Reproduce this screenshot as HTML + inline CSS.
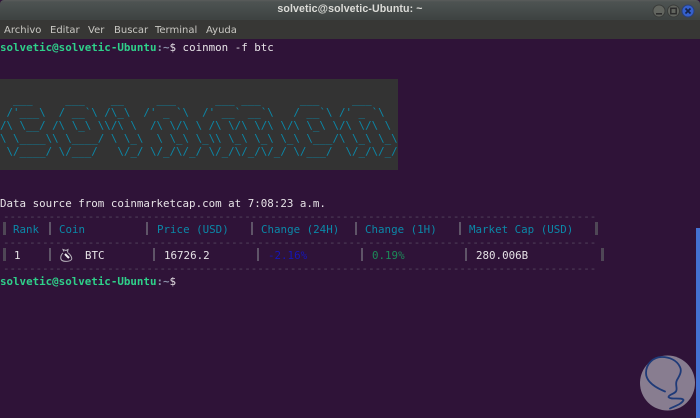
<!DOCTYPE html>
<html><head><meta charset="utf-8"><style>
*{margin:0;padding:0;box-sizing:border-box}
html,body{width:700px;height:418px;overflow:hidden;background:#2f1338}
#t{position:absolute;left:0;top:0;width:700px;height:20px;background:linear-gradient(#5a5d5c 0,#4d5352 2px,#3e4342 19px);border-radius:4px 4px 0 0}
#m{position:absolute;left:0;top:20px;width:700px;height:19px;background:#373735}
.u{position:absolute;font:10px/13px "DejaVu Sans",sans-serif;white-space:pre;color:#c9c8c3}
.l{position:absolute;left:0;font:10.83px/13px "DejaVu Sans Mono",monospace;white-space:pre;color:#e6e2e6}
.a{position:absolute;left:0;font:10.83px/13px "DejaVu Sans Mono",monospace;white-space:pre;color:#0b88a8}
.g{color:#2fd08a;font-weight:bold}
.s{color:#8a8fa8;font-weight:bold}
.d{color:#54465e}
.c{color:#0b88a8}
.b{position:absolute;width:1.5px;background:#5f5468}
.b.x{width:3px;background:#4f4756}
</style></head><body>
<div id="t"></div>
<div id="m"></div>
<div class="u" style="left:0;width:700px;top:3px;text-align:center;color:#dcdcd8;font:bold 10.6px/13px 'Liberation Sans',sans-serif;letter-spacing:.1px">solvetic@solvetic-Ubuntu: ~</div>
<div class="u" style="left:4px;top:24px">Archivo</div>
<div class="u" style="left:50px;top:24px">Editar</div>
<div class="u" style="left:88px;top:24px">Ver</div>
<div class="u" style="left:114px;top:24px">Buscar</div>
<div class="u" style="left:155px;top:24px">Terminal</div>
<div class="u" style="left:206px;top:24px">Ayuda</div>
<svg style="position:absolute;left:650px;top:3px" width="50" height="16" viewBox="0 0 50 16">
<circle cx="9" cy="8" r="6" fill="#62655f" stroke="#3a3c3a"/><rect x="6" y="10" width="6" height="1.6" fill="#2c2c2c"/>
<circle cx="23.500" cy="8" r="6" fill="#62655f" stroke="#3a3c3a"/><rect x="20.800" y="5.300" width="5.400" height="5.400" fill="none" stroke="#2c2c2c" stroke-width="1.500"/>
<circle cx="38" cy="8" r="6" fill="#3560cc" stroke="#2a3f78"/><path d="M35.500 5.500L40.500 10.500M40.500 5.500L35.500 10.500" stroke="#15244a" stroke-width="1.700"/>
</svg>
<div class="l" style="top:41px"><span class="g">solvetic@solvetic-Ubuntu</span><span class="s">:~</span>$ coinmon -f btc</div>
<div style="position:absolute;left:0;top:79px;width:398px;height:91px;background:#333333"></div>
<div class="a" style="top:93px">  ___     ___    __     ___      ___ ___      ___     ___</div>
<div class="a" style="top:106px"> /'___\  / __`\ /\_\  /' _ `\  /' __` __`\   / __`\ /' _ `\</div>
<div class="a" style="top:119px">/\ \__/ /\ \_\ \\/\ \  /\ \/\ \ /\ \/\ \/\ \/\ \_\ \/\ \/\ \</div>
<div class="a" style="top:132px">\ \____\\ \____/ \ \_\  \ \_\ \_\\ \_\ \_\ \_\ \___/\ \_\ \_\</div>
<div class="a" style="top:145px"> \/____/ \/___/   \/_/ \/_/\/_/ \/_/\/_/\/_/ \/___/  \/_/\/_/</div>
<div class="l" style="top:197px">Data source from coinmarketcap.com at 7:08:23 a.m.</div>
<div class="l d" style="top:210px;left:3px">-------------------------------------------------------------------------------------------</div>
<div class="l d" style="top:236px;left:3px">-------------------------------------------------------------------------------------------</div>
<div class="l d" style="top:262px;left:3px">-------------------------------------------------------------------------------------------</div>
<div class="b x" style="left:3px;top:222px;height:13px"></div>
<div class="b" style="left:49px;top:222px;height:13px"></div>
<div class="b" style="left:146px;top:222px;height:13px"></div>
<div class="b" style="left:251px;top:222px;height:13px"></div>
<div class="b" style="left:355px;top:222px;height:13px"></div>
<div class="b" style="left:459px;top:222px;height:13px"></div>
<div class="b x" style="left:595px;top:222px;height:13px"></div>
<div class="l c" style="top:223px;left:13px">Rank</div>
<div class="l c" style="top:223px;left:59px">Coin</div>
<div class="l c" style="top:223px;left:157px">Price (USD)</div>
<div class="l c" style="top:223px;left:261px">Change (24H)</div>
<div class="l c" style="top:223px;left:365px">Change (1H)</div>
<div class="l c" style="top:223px;left:469px">Market Cap (USD)</div>
<div class="b x" style="left:3px;top:248px;height:13px"></div>
<div class="b" style="left:49px;top:248px;height:13px"></div>
<div class="b" style="left:153px;top:248px;height:13px"></div>
<div class="b" style="left:257px;top:248px;height:13px"></div>
<div class="b" style="left:361px;top:248px;height:13px"></div>
<div class="b" style="left:465px;top:248px;height:13px"></div>
<div class="b x" style="left:601px;top:248px;height:13px"></div>
<div class="l" style="top:249px;left:14px">1</div>
<svg style="position:absolute;left:59px;top:248px" width="15" height="15" viewBox="0 0 15 15"><path d="M5 3.500L4 1.500L7 2.500L9 1.500L8.500 4M4 5C1.500 7 1 11 3 12.500C6 14 11 13.500 12.500 11.500C13.500 9.500 11 6 8.500 4.500" fill="none" stroke="#b8b4bc" stroke-width="1"/><path d="M6 6L10 10" stroke="#f0eef0" stroke-width="2"/></svg>
<div class="l" style="top:249px;left:85px">BTC</div>
<div class="l" style="top:249px;left:164px">16726.2</div>
<div class="l" style="top:249px;left:268px;color:#1616b8">-2.16%</div>
<div class="l" style="top:249px;left:372px;color:#1c8a58">0.19%</div>
<div class="l" style="top:249px;left:476px">280.006B</div>
<div class="l" style="top:275px"><span class="g">solvetic@solvetic-Ubuntu</span><span class="s">:~</span>$</div>
<div style="position:absolute;left:696px;top:228px;width:4px;height:190px;background:#4472d2"></div>
<svg style="position:absolute;left:640px;top:354px" width="56" height="60" viewBox="0 0 56 60">
<circle cx="27.500" cy="29" r="27.500" fill="#887d90"/>
<path d="M30 54.500C35 52 42 50 43.500 46C42 43 30 46 28.500 43C29 40 36 40 36.500 36C37 32 35 30 37 26C40 21 42 17 40 13C37 6 29 3 22 3C13 3 6 10 6 19C6 27 14 33 25 37.500" fill="none" stroke="#1e3a78" stroke-width="1.800" stroke-linecap="round"/>
</svg>
</body></html>
